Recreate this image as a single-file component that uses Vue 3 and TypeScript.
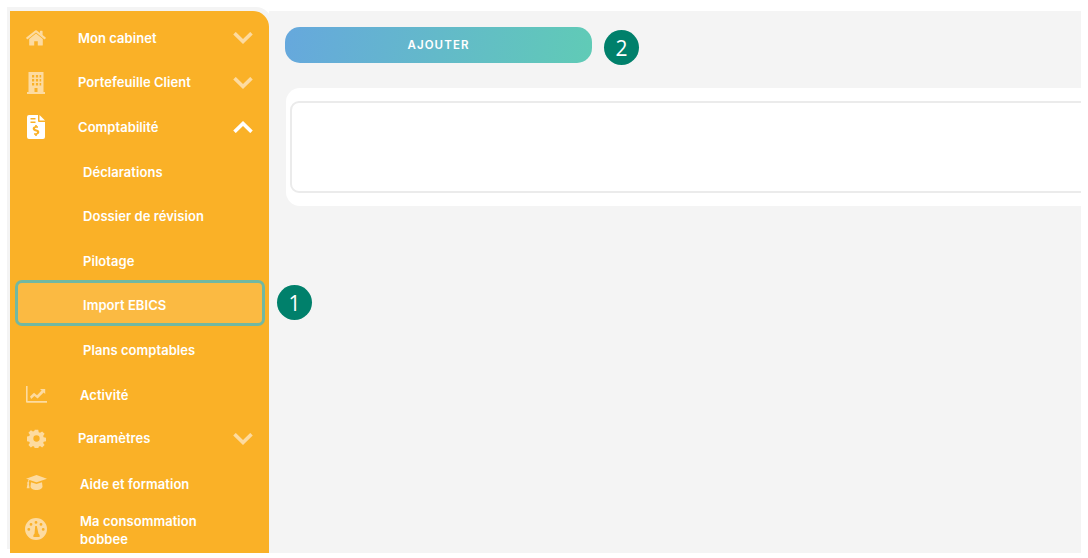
<script setup lang="ts">
interface NavItem {
  label: string
  icon?: string
  kind: 'parent' | 'plain' | 'sub'
  open?: boolean
  active?: boolean
}

const items: NavItem[] = [
  { label: 'Mon cabinet', icon: 'home', kind: 'parent' },
  { label: 'Portefeuille Client', icon: 'building', kind: 'parent' },
  { label: 'Comptabilité', icon: 'invoice', kind: 'parent', open: true },
  { label: 'Déclarations', kind: 'sub' },
  { label: 'Dossier de révision', kind: 'sub' },
  { label: 'Pilotage', kind: 'sub' },
  { label: 'Import EBICS', kind: 'sub', active: true },
  { label: 'Plans comptables', kind: 'sub' },
  { label: 'Activité', icon: 'chart', kind: 'plain' },
  { label: 'Paramètres', icon: 'cog', kind: 'parent' },
  { label: 'Aide et formation', icon: 'cap', kind: 'plain' },
  { label: 'Ma consommation bobbee', icon: 'gauge', kind: 'plain' }
]
</script>

<template>
  <div class="shell">
    <aside class="sidebar">
      <div
        v-for="item in items"
        :key="item.label"
        class="row"
        :class="[item.kind, { open: item.open, active: item.active }]"
      >
        <span v-if="item.icon" class="icon">
          <svg v-if="item.icon === 'home'" width="20" height="16" viewBox="0 0 20 16">
            <path d="M10 3.4 3.2 9v6a.6.6 0 0 0 .6.6h4.4v-4.4h3.6v4.4h4.4a.6.6 0 0 0 .6-.6V9z" />
            <path d="M19.7 7.6 16.6 5V1.2a.4.4 0 0 0-.4-.4h-1.9a.4.4 0 0 0-.4.4v1.7L10.8.5a1.3 1.3 0 0 0-1.6 0L.3 7.6a.4.4 0 0 0 0 .6l.8 1a.4.4 0 0 0 .6 0L10 2.4l8.3 6.8a.4.4 0 0 0 .6 0l.8-1a.4.4 0 0 0 0-.6z" />
          </svg>
          <svg v-else-if="item.icon === 'building'" width="18" height="22" viewBox="0 0 18 22">
            <path fill-rule="evenodd" d="M1.500 0h15v20h1.500v2H0v-2h1.500zM5 3v2.400h2.200V3zm3.900 0v2.400h2.200V3zM12.600 3v2.400h1.600V3zM5 7v2.400h2.200V7zm3.900 0v2.400h2.200V7zM12.600 7v2.400h1.600V7zM5 11v2.400h2.200V11zm3.900 0v2.400h2.200V11zM12.600 11v2.400h1.600V11zM7.500 16v4h3v-4z" />
          </svg>
          <svg v-else-if="item.icon === 'invoice'" width="18" height="24" viewBox="0 0 18 24">
            <path fill-rule="evenodd" d="M2 0h9v6a1 1 0 0 0 1 1h6v15a2 2 0 0 1-2 2H2a2 2 0 0 1-2-2V2a2 2 0 0 1 2-2zm1.500 3v1.500h5V3zm0 3.500V8h5V6.500zM8.200 10v1.300c-1.500.2-2.500 1.200-2.500 2.500 0 1.300 1 2 2.300 2.400l1.200.4c.5.2.8.400.8.800 0 .5-.4.8-1 .8H7v1.500h1.200V21h1.600v-1.300c1.500-.2 2.500-1.200 2.500-2.600 0-1.300-.9-2-2.200-2.400l-1.300-.4c-.5-.2-.8-.4-.8-.8 0-.4.400-.7 1-.7H11v-1.500H9.800V10z" />
            <path d="M12.500 0 18 5.500h-5.500z" />
          </svg>
          <svg v-else-if="item.icon === 'chart'" class="wide" width="21" height="17" viewBox="0 0 21 17">
            <path d="M0 0h1.600v15h19.400v1.700H1a1 1 0 0 1-1-1z" />
            <path d="M4 10.500 8 6.800l3 2.400 4.600-4.600-1.600-1.600h5.200V8l-1.600-1.600-6 6-3.200-2.500-3.200 3z" />
          </svg>
          <svg v-else-if="item.icon === 'cog'" width="19" height="19" viewBox="0 0 24 24">
            <path fill-rule="evenodd" d="M9.800 1h4.400l.6 3.100 1.700.7 2.600-1.800 3.100 3.100-1.800 2.600.7 1.700 3 .6v4.400l-3 .6-.7 1.700 1.800 2.600-3.100 3.100-2.600-1.800-1.700.7-.6 3H9.800l-.6-3-1.700-.7-2.600 1.800-3.100-3.100 1.800-2.600-.7-1.700-3-.6V9.500l3-.6.7-1.700L1.800 4.600l3.100-3.100 2.600 1.800 1.700-.7zM12 8a4 4 0 1 0 0 8 4 4 0 0 0 0-8z" />
          </svg>
          <svg v-else-if="item.icon === 'cap'" class="wide" width="21" height="16" viewBox="0 0 21 16">
            <path d="M10.500 0 21 3.700 10.800 7.300a1 1 0 0 1-.6 0L3.600 5c-.6.500-1 1.200-1 2 .4.200.6.500.6.900 0 .3-.2.600-.4.800l.8 4.500H.7l.8-4.500a1 1 0 0 1-.4-.8c0-.4.300-.8.600-1 .1-1 .5-1.800 1.100-2.500L0 3.700z" />
            <path d="M5 7.200l4.800 1.600a2 2 0 0 0 1.400 0L16 7.200l.5 4.300c0 1.900-2.700 3.500-6 3.500s-6-1.600-6-3.500z" />
          </svg>
          <svg v-else width="22" height="22" viewBox="0 0 22 22">
            <path fill-rule="evenodd" d="M11 0a11 11 0 1 1 0 22 11 11 0 0 1 0-22zm0 3a1.400 1.400 0 1 0 0 2.800A1.400 1.400 0 0 0 11 3zM6 5a1.400 1.400 0 1 0 0 2.800A1.400 1.400 0 0 0 6 5zm10 0a1.400 1.400 0 1 0 0 2.800A1.400 1.400 0 0 0 16 5zM3.800 10a1.400 1.400 0 1 0 0 2.800 1.400 1.400 0 0 0 0-2.800zm14.400 0a1.400 1.400 0 1 0 0 2.800 1.400 1.400 0 0 0 0-2.800zM10.200 8l-.7 7.800a2.600 2.600 0 0 0-1.200 2.200c0 .4.100.8.300 1.100h5.800c.2-.3.300-.7.300-1.100 0-1-.5-1.800-1.200-2.200L11.800 8z" />
          </svg>
        </span>
        <span class="label">{{ item.label }}</span>
        <svg v-if="item.kind === 'parent'" class="chevron" width="20" height="12" viewBox="0 0 20 12">
          <path :d="item.open ? 'M1.500 10.800 10 2.500l8.500 8.300' : 'M1.500 1.200 10 9.500l8.500-8.300'" />
        </svg>
        <span v-if="item.active" class="marker one">1</span>
      </div>
    </aside>

    <main class="content">
      <div class="actions">
        <button class="add" type="button">AJOUTER</button>
        <span class="marker two">2</span>
      </div>
      <section class="card">
        <div class="box"></div>
      </section>
    </main>
  </div>
</template>

<style>
body {
  background: #fff;
}
</style>

<style scoped>
.shell {
  display: flex;
  width: 1081px;
  height: 553px;
  padding-top: 11px;
  box-sizing: border-box;
  overflow: hidden;
  font-family: Inter, "Liberation Sans", sans-serif;
}
.sidebar {
  flex: 0 0 259px;
  margin-left: 10px;
  padding-top: 5px;
  background: #fab127;
  border-top-right-radius: 16px;
  box-shadow: -3px -4px 0 #f4f4f4, 3px -4px 0 #f4f4f4;
}
.row {
  position: relative;
  display: flex;
  align-items: center;
  height: 44.5px;
  box-sizing: border-box;
  color: #fff;
  font-size: 13px;
  font-weight: 600;
  letter-spacing: 0.05px;
}
.icon {
  flex: 0 0 22px;
  display: flex;
  justify-content: center;
  margin-left: 15px;
  fill: #fddba0;
}
.open .icon {
  fill: #fff;
}
.parent .label {
  margin-left: 31px;
  padding-bottom: 1px;
}
.plain .label {
  margin-left: 33px;
  width: 150px;
  padding-top: 1px;
  line-height: 18px;
}
.plain:last-child {
  padding-top: 3px;
}
.sub {
  padding: 0 0 0 73px;
}
.sub.active {
  height: 46px;
  margin: -3px 4px 1.5px 5px;
  padding: 4px 0 0 65px;
  background: #fbba42;
  border: 3px solid #71b8a2;
  border-radius: 7px;
}
.chevron {
  position: absolute;
  right: 16px;
  top: 50%;
  margin-top: -6px;
  fill: none;
  stroke: #fddba0;
  stroke-width: 3.6;
}
.open .chevron {
  stroke: #fff;
}
.content {
  flex: 1;
  min-width: 0;
  padding: 16px 0 0 16px;
  background: #f4f4f4;
}
.actions {
  display: flex;
  align-items: flex-start;
  gap: 12px;
}
.add {
  width: 307px;
  height: 36px;
  border: 0;
  border-radius: 15px;
  background: linear-gradient(100deg, #66a8dd, #60cbb6);
  color: #fff;
  font-family: inherit;
  font-size: 11.5px;
  font-weight: 600;
  letter-spacing: 1.1px;
}
.marker {
  display: flex;
  align-items: center;
  justify-content: center;
  width: 35px;
  height: 35px;
  border-radius: 50%;
  background: #00806b;
  color: #fff;
  font-family: "Open Sans", sans-serif;
  font-size: 21px;
  font-weight: 400;
  letter-spacing: 0;
}
.marker.two {
  margin-top: 3px;
}
.marker.one {
  position: absolute;
  left: 259px;
  top: 2px;
}
.card {
  margin: 23px -16px 0 1px;
  padding: 13px 0 13px 4px;
  background: #fff;
  border-radius: 14px;
}
.box {
  height: 92px;
  box-sizing: border-box;
  border: 2px solid #ebebeb;
  border-radius: 9px;
}
</style>
